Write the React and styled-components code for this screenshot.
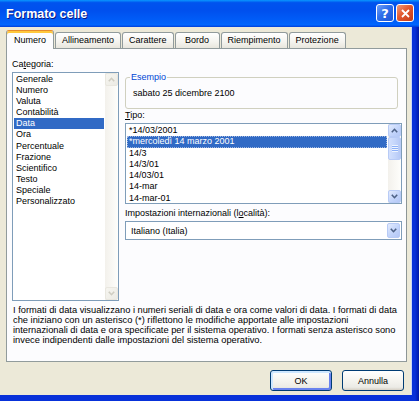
import React from "react";
import styled, { createGlobalStyle } from "styled-components";

const Global = createGlobalStyle`
  html, body {
    margin: 0;
    padding: 0;
    background: #ffffff;
  }
  body {
    font-family: "Liberation Sans", Arial, sans-serif;
    font-size: 9px;
    color: #000;
  }
`;

const categories = [
  "Generale",
  "Numero",
  "Valuta",
  "Contabilità",
  "Data",
  "Ora",
  "Percentuale",
  "Frazione",
  "Scientifico",
  "Testo",
  "Speciale",
  "Personalizzato",
];

const types = [
  "*14/03/2001",
  "*mercoledì 14 marzo 2001",
  "14/3",
  "14/3/01",
  "14/03/01",
  "14-mar",
  "14-mar-01",
];

const tabs = ["Numero", "Allineamento", "Carattere", "Bordo", "Riempimento", "Protezione"];

function Chevron({ up, color }) {
  return (
    <svg width="7" height="5" viewBox="0 0 7 5">
      <path
        d={up ? "M0.8 4.2 L3.5 1.3 L6.2 4.2" : "M0.8 0.8 L3.5 3.7 L6.2 0.8"}
        fill="none"
        stroke={color}
        strokeWidth="1.6"
      />
    </svg>
  );
}

function App() {
  return (
    <>
      <Global />
      <Window>
        <TitleBar>
          <Title>Formato celle</Title>
          <TitleButtons>
            <HelpButton>?</HelpButton>
            <CloseButton>
              <svg width="9" height="9" viewBox="0 0 9 9">
                <path d="M1 1 L8 8 M8 1 L1 8" stroke="#fff" strokeWidth="1.8" />
              </svg>
            </CloseButton>
          </TitleButtons>
        </TitleBar>

        <Frame>
          <Body>
            <TabRow>
              {tabs.map((t, i) => (
                <Tab key={t} $active={i === 0}>
                  {t}
                </Tab>
              ))}
            </TabRow>

            <Panel>
              <Columns>
                <LeftColumn>
                  <Label>
                    Ca<u>t</u>egoria:
                  </Label>
                  <ListBox $height={229}>
                    <Items>
                      {categories.map((c) => (
                        <Item key={c} $selected={c === "Data"} $step={11.1}>
                          {c}
                        </Item>
                      ))}
                    </Items>
                    <ScrollBar>
                      <ArrowButton $disabled>
                        <Chevron up color="#CFCDC2" />
                      </ArrowButton>
                      <Track />
                      <ArrowButton $disabled>
                        <Chevron color="#CFCDC2" />
                      </ArrowButton>
                    </ScrollBar>
                  </ListBox>
                </LeftColumn>

                <RightColumn>
                  <GroupBox>
                    <Legend>Esempio</Legend>
                    <SampleText>sabato 25 dicembre 2100</SampleText>
                  </GroupBox>

                  <Label $top={1}>
                    <u>T</u>ipo:
                  </Label>
                  <ListBox $height={81}>
                    <Items>
                      {types.map((t, i) => (
                        <Item key={t} $selected={i === 1} $focus={i === 1} $step={11.3}>
                          {t}
                        </Item>
                      ))}
                    </Items>
                    <ScrollBar>
                      <ArrowButton>
                        <Chevron up color="#4D6185" />
                      </ArrowButton>
                      <Thumb>
                        <Grip />
                      </Thumb>
                      <Track />
                      <ArrowButton>
                        <Chevron color="#4D6185" />
                      </ArrowButton>
                    </ScrollBar>
                  </ListBox>

                  <Label $top={4}>
                    Impostazioni internazionali (l<u>o</u>calità):
                  </Label>
                  <Combo>
                    <ComboText>Italiano (Italia)</ComboText>
                    <ComboButton>
                      <Chevron color="#4D6185" />
                    </ComboButton>
                  </Combo>
                </RightColumn>
              </Columns>

              <Description>
                I formati di data visualizzano i numeri seriali di data e ora come valori di data. I formati di data
                <br />
                che iniziano con un asterisco (*) riflettono le modifiche apportate alle impostazioni
                <br />
                internazionali di data e ora specificate per il sistema operativo. I formati senza asterisco sono
                <br />
                invece indipendenti dalle impostazioni del sistema operativo.
              </Description>
            </Panel>

            <ButtonRow>
              <DialogButton $default>OK</DialogButton>
              <DialogButton>Annulla</DialogButton>
            </ButtonRow>
          </Body>
        </Frame>
      </Window>
    </>
  );
}

export default App;

const Window = styled.div`
  width: 419px;
  height: 401px;
  display: flex;
  flex-direction: column;
  overflow: hidden;
`;

const TitleBar = styled.div`
  height: 27px;
  flex: none;
  display: flex;
  align-items: center;
  justify-content: space-between;
  padding: 0 5px 0 6px;
  box-sizing: border-box;
  background: linear-gradient(
    to bottom,
    #0997ff 0%,
    #0053ee 10%,
    #0050ee 40%,
    #0061fb 85%,
    #0066ff 92%,
    #003dd7 100%
  );
`;

const Title = styled.div`
  color: #fff;
  font-weight: bold;
  font-size: 12.5px;
  text-shadow: 1px 1px 0 #0a1883;
`;

const TitleButtons = styled.div`
  display: flex;
  gap: 2px;
  margin-top: -1px;
`;

const CaptionButton = styled.div`
  width: 18px;
  height: 18px;
  box-sizing: border-box;
  border: 1px solid #fff;
  border-radius: 3px;
  display: flex;
  align-items: center;
  justify-content: center;
  color: #fff;
`;

const HelpButton = styled(CaptionButton)`
  background: linear-gradient(135deg, #6fa0f9 0%, #2f6fea 45%, #1d55d6 100%);
  font-weight: bold;
  font-size: 13px;
  font-family: "DejaVu Sans", sans-serif;
`;

const CloseButton = styled(CaptionButton)`
  background: linear-gradient(135deg, #f09a78 0%, #e2582f 45%, #c43b17 100%);
`;

const Frame = styled.div`
  flex: 1;
  display: flex;
  padding: 0 7px 6px 0;
  background: linear-gradient(to right, #0831d9 0, #0831d9 calc(100% - 4px), #0019a8 100%);
`;

const Body = styled.div`
  flex: 1;
  display: flex;
  flex-direction: column;
  background: #ece9d8;
  padding: 0 4px 4px 6px;
  border-right: 1px solid #c9d6f5;
`;

const TabRow = styled.div`
  height: 22px;
  margin-bottom: -1px;
  display: flex;
  align-items: flex-end;
  gap: 1px;
`;

const Tab = styled.div`
  position: relative;
  box-sizing: border-box;
  min-width: 45px;
  padding: 0 6px;
  text-align: center;
  border: 1px solid #919b9c;
  border-bottom: none;
  border-radius: 3px 3px 0 0;
  height: ${(p) => (p.$active ? "19px" : "16px")};
  margin-bottom: ${(p) => (p.$active ? "0" : "1px")};
  line-height: ${(p) => (p.$active ? "18px" : "15px")};
  background: ${(p) =>
    p.$active ? "#fcfcfe" : "linear-gradient(to bottom, #ffffff 0%, #f4f3ee 60%, #e8e6dd 100%)"};
  z-index: ${(p) => (p.$active ? 1 : 0)};
  ${(p) =>
    p.$active &&
    `
    padding: 0 7px;
    border-top: 1px solid #e68b2c;
    box-shadow: inset 0 2px 0 #ffc83c;
  `}
`;

const Panel = styled.div`
  height: 314px;
  box-sizing: border-box;
  background: #fcfcfe;
  border: 1px solid #919b9c;
  border-right-color: #8c9596;
  padding: 10px 4px 0 5px;
  display: flex;
  flex-direction: column;
`;

const Columns = styled.div`
  display: grid;
  grid-template-columns: 107px 1fr;
  column-gap: 6px;
`;

const LeftColumn = styled.div`
  display: flex;
  flex-direction: column;
`;

const RightColumn = styled.div`
  display: flex;
  flex-direction: column;
  padding-top: 13px;
`;

const Label = styled.div`
  line-height: 11px;
  height: 11px;
  margin-top: ${(p) => p.$top || 0}px;
  margin-bottom: 2px;
  white-space: nowrap;
`;

const ListBox = styled.div`
  height: ${(p) => p.$height}px;
  box-sizing: border-box;
  border: 1px solid #7f9db9;
  background: #fff;
  display: flex;
`;

const Items = styled.div`
  flex: 1;
  padding-top: 1px;
  overflow: hidden;
`;

const Item = styled.div`
  height: ${(p) => p.$step}px;
  line-height: ${(p) => p.$step}px;
  margin: 0 1px;
  padding-left: 2px;
  white-space: nowrap;
  background: ${(p) => (p.$selected ? "#316ac5" : "transparent")};
  color: ${(p) => (p.$selected ? "#fff" : "#000")};
  outline: ${(p) => (p.$focus ? "1px dotted #9fb6e0" : "none")};
  outline-offset: -1px;
`;

const ScrollBar = styled.div`
  width: 13px;
  display: flex;
  flex-direction: column;
  background: linear-gradient(to right, #f3f1ec, #fefefb);
`;

const ArrowButton = styled.div`
  height: 13px;
  flex: none;
  box-sizing: border-box;
  display: flex;
  align-items: center;
  justify-content: center;
  border-radius: 2px;
  border: 1px solid ${(p) => (p.$disabled ? "#e9e7df" : "#b8cbf6")};
  background: ${(p) =>
    p.$disabled
      ? "linear-gradient(135deg, #f6f5f0, #ecebe5)"
      : "linear-gradient(135deg, #e3ebfd 0%, #c5d6fb 50%, #b3c7f6 100%)"};
`;

const Track = styled.div`
  flex: 1;
`;

const Thumb = styled.div`
  height: 23px;
  flex: none;
  box-sizing: border-box;
  border: 1px solid #b8cbf6;
  border-radius: 2px;
  background: linear-gradient(to right, #d3e0fd 0%, #c5d6fb 50%, #b6c9f6 100%);
  display: flex;
  align-items: center;
  justify-content: center;
`;

const Grip = styled.div`
  width: 6px;
  height: 7px;
  background: repeating-linear-gradient(
    to bottom,
    #eef4fe 0,
    #eef4fe 1px,
    #8cb0f8 1px,
    #8cb0f8 2px
  );
`;

const GroupBox = styled.fieldset`
  margin: 0 4px 0 0;
  padding: 5px 7px 9px 7px;
  border: 1px solid #d0d0bf;
  border-radius: 3px;
  min-width: 0;
`;

const Legend = styled.legend`
  color: #0046d5;
  padding: 0 1px;
  margin-left: -3px;
  line-height: 11px;
`;

const SampleText = styled.div`
  line-height: 11px;
`;

const Combo = styled.div`
  height: 19px;
  box-sizing: border-box;
  border: 1px solid #7f9db9;
  background: #fff;
  display: flex;
  align-items: center;
  padding: 1px;
`;

const ComboText = styled.div`
  flex: 1;
  padding-left: 4px;
`;

const ComboButton = styled(ArrowButton)`
  width: 13px;
  height: 15px;
`;

const Description = styled.p`
  margin: 4px 0 0 1px;
  font-size: 9.3px;
  line-height: 10px;
  white-space: nowrap;
`;

const ButtonRow = styled.div`
  display: flex;
  justify-content: flex-end;
  gap: 10px;
  margin-top: 8px;
  padding-right: 3px;
`;

const DialogButton = styled.div`
  width: 62px;
  height: 21px;
  box-sizing: border-box;
  border: 1px solid #003c74;
  border-radius: 3px;
  display: flex;
  align-items: center;
  justify-content: center;
  background: linear-gradient(to bottom, #ffffff 0%, #f5f4ef 50%, #ecebe6 85%, #d6d0c5 100%);
  box-shadow: ${(p) =>
    p.$default ? "inset 1px 1px 0 1px #cee7ff, inset -1px -1px 0 1px #6982ee" : "none"};
`;
